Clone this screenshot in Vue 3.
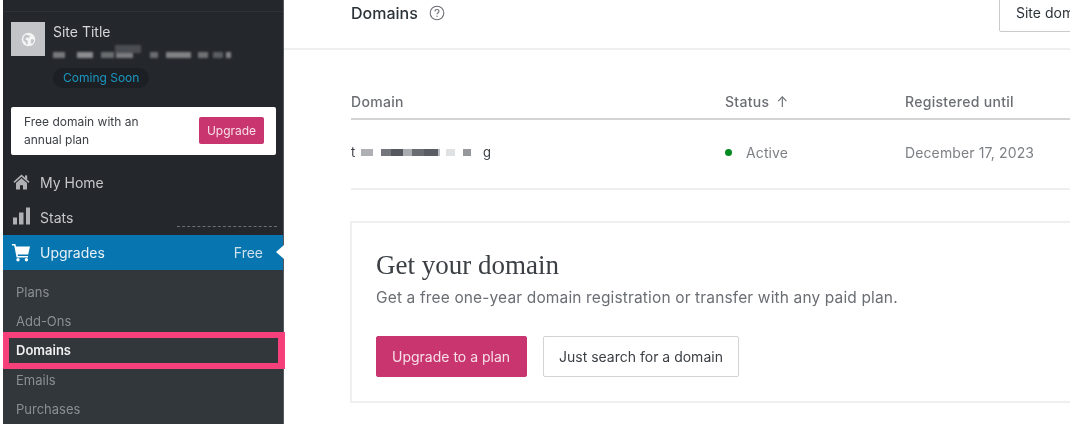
<script setup>
const siteBlocks = [
  { w: 12, c: '#77797d', gap: 12 }, { w: 16, c: '#8a8c8f', gap: 8 }, { w: 13, c: '#6a6d70', gap: 2 }, { w: 17, c: '#7a7c80', gap: 17 },
  { w: 8, c: '#6a6d70', gap: 8 }, { w: 25, c: '#808285', gap: 7 }, { w: 10, c: '#6f7275', gap: 5 }, { w: 10, c: '#5a5d61', gap: 3 },
  { w: 5, c: '#808285', gap: 0 }
]
const domainBlocks = [
  { w: 12, c: '#aeb0b3', gap: 8 }, { w: 10, c: '#74767c', gap: 0 }, { w: 12, c: '#55585f', gap: 0 }, { w: 9, c: '#aaacaf', gap: 0 },
  { w: 12, c: '#6a6c72', gap: 0 }, { w: 14, c: '#5a5d63', gap: 0 }, { w: 2, c: '#bbbcbf', gap: 6 }, { w: 9, c: '#e0e1e3', gap: 8 },
  { w: 8, c: '#96989c', gap: 0 }
]
const subItems = [
  { label: 'Plans' }, { label: 'Add-Ons' }, { label: 'Domains', active: true }, { label: 'Emails' }, { label: 'Purchases' }
]
</script>

<template>
  <div class="app">
    <aside class="sidebar">
      <div class="top-rule"></div>
      <div class="site">
        <div class="site-icon">
          <svg viewBox="0 0 20 20" width="17" height="17">
            <circle cx="10" cy="10" r="8" fill="#f4f4f5" />
            <path d="M7 4.5c2 .2 4 .6 5 1.6l-2.2 2.2-2.4-.6-1 2.2 2.4 1.4.4 3-1.4 1.8-1.6-3.4-2.4-1.8C3.8 7.8 5 5.6 7 4.5z" fill="#c3c4c7" />
            <path d="M13.5 9.5l3 .8c0 2-1 4-2.6 5l-1.4-2.8z" fill="#c3c4c7" />
          </svg>
        </div>
        <div class="site-info">
          <div class="site-title">Site Title</div>
          <div class="site-url">
            <span
              v-for="(b, i) in siteBlocks"
              :key="i"
              class="pixel"
              :style="{ width: b.w + 'px', background: b.c, marginRight: b.gap + 'px' }"
            ></span>
          </div>
          <div class="pill">Coming Soon</div>
        </div>
      </div>

      <div class="upsell">
        <span class="upsell-text">Free domain with an<br />annual plan</span>
        <span class="upsell-btn">Upgrade</span>
      </div>

      <nav class="nav">
        <div class="nav-row">
          <svg class="nav-icon" viewBox="0 0 20 20" width="20" height="20">
            <path d="M5 11 10.5 6.2 16 11v6.6h-4v-4.4H9v4.4H5z" fill="#aeb0b3" />
            <path d="M3 10.4 10.5 3.6l7.5 6.8" fill="none" stroke="#aeb0b3" stroke-width="1.6" />
            <rect x="14" y="3.4" width="2.2" height="4" fill="#aeb0b3" />
          </svg>
          <span>My Home</span>
        </div>
        <div class="nav-row">
          <svg class="nav-icon" viewBox="0 0 20 20" width="20" height="20">
            <rect x="2" y="10.5" width="4" height="7" fill="#aeb0b3" />
            <rect x="8" y="5.5" width="4.5" height="12" fill="#aeb0b3" />
            <rect x="15" y="0.5" width="4" height="17" fill="#aeb0b3" />
          </svg>
          <span>Stats</span>
          <i class="stray-line"></i>
        </div>
        <div class="nav-row current">
          <svg class="nav-icon" viewBox="0 0 20 20" width="20" height="20">
            <path d="M1 2h3.4l.6 2.4H19l-1.8 8H6.6l.4 1.6h10v1.6H5.6L3.2 3.6H1z" fill="#fff" />
            <circle cx="7" cy="17.8" r="1.7" fill="#fff" />
            <circle cx="15.4" cy="17.8" r="1.7" fill="#fff" />
          </svg>
          <span>Upgrades</span>
          <span class="free">Free</span>
          <i class="caret"></i>
        </div>
      </nav>

      <ul class="submenu">
        <li v-for="item in subItems" :key="item.label" :class="{ active: item.active }">{{ item.label }}</li>
      </ul>
    </aside>

    <main class="main">
      <header class="header">
        <div class="header-title">
          <span>Domains</span>
          <svg viewBox="0 0 16 16" width="16" height="16">
            <circle cx="8" cy="8" r="6.8" fill="none" stroke="#6b6e73" stroke-width="1.1" />
            <path d="M6 6.4c0-1.2.9-1.9 2-1.9s2 .7 2 1.7c0 1.5-2 1.5-2 3" fill="none" stroke="#6b6e73" stroke-width="1.1" />
            <circle cx="8" cy="11.3" r=".7" fill="#6b6e73" />
          </svg>
        </div>
        <div class="site-btn">Site domains</div>
      </header>

      <section class="content">
        <div class="table-head">
          <span class="col-domain">Domain</span>
          <span class="col-status">Status <b>↑</b></span>
          <span class="col-date">Registered until</span>
        </div>
        <div class="table-row">
          <span class="col-domain domain-value">
            <span class="letter">t</span>
            <span
              v-for="(b, i) in domainBlocks"
              :key="i"
              class="pixel dom"
              :style="{ width: b.w + 'px', background: b.c, marginRight: b.gap + 'px' }"
            ></span>
            <span class="letter last">g</span>
          </span>
          <span class="col-status status-value"><i class="dot"></i>Active</span>
          <span class="col-date">December 17, 2023</span>
        </div>

        <div class="card">
          <h2>Get your domain</h2>
          <p>Get a free one-year domain registration or transfer with any paid plan.</p>
          <div class="actions">
            <span class="btn primary">Upgrade to a plan</span>
            <span class="btn">Just search for a domain</span>
          </div>
        </div>
      </section>
    </main>
  </div>
</template>

<style>
html, body { margin: 0; background: #fff; overflow: hidden; }
</style>

<style scoped>
.app {
  display: flex;
  width: 1070px;
  height: 424px;
  overflow: hidden;
  background: #fff;
  font-family: Inter, "Liberation Sans", sans-serif;
  filter: blur(0.35px);
}
.sidebar {
  width: 280px;
  margin-left: 3px;
  flex: none;
  background: #24272c;
  border-right: 1px solid #55585c;
  display: flex;
  flex-direction: column;
}
.top-rule { height: 1px; margin-top: 11px; background: #2e3136; }
.site { display: flex; gap: 8px; padding: 10px 0 0 8px; }
.site-icon {
  width: 34px; height: 34px; background: #c3c4c7;
  display: flex; align-items: center; justify-content: center;
}
.site-info { display: flex; flex-direction: column; align-items: flex-start; }
.site-title { font-size: 14px; line-height: 18px; color: #d5d6d8; margin-top: 1px; }
.site-url { position: relative; display: flex; height: 6px; margin-top: 11px; filter: blur(1px); }
.site-url::before {
  content: "";
  position: absolute;
  left: 62px; top: -7px;
  width: 26px; height: 8px;
  background: #4a4d51;
}
.pixel { display: block; height: 6px; flex: none; }
.pill {
  margin-top: 10px;
  height: 20px;
  padding: 0 10px;
  border-radius: 10px;
  background: #1c1f24;
  color: #1b98c2;
  font-size: 12px;
  line-height: 20px;
}
.upsell {
  margin: 19px 7px 0 8px;
  height: 48px;
  background: #fff;
  border-radius: 2px;
  display: flex;
  align-items: center;
  justify-content: space-between;
  padding: 0 12px 0 13px;
  box-sizing: border-box;
}
.upsell-text { font-size: 12px; line-height: 18px; color: #3c4045; }
.upsell-btn {
  width: 65px; height: 27px; border-radius: 2px; background: #c9356e; color: #f6dfe8;
  font-size: 12px; line-height: 27px; text-align: center;
}
.nav { margin-top: 10px; display: flex; flex-direction: column; }
.nav-row {
  position: relative;
  height: 35px;
  display: flex;
  align-items: center;
  padding-left: 8px;
  gap: 9px;
  font-size: 14px;
  color: #c6c8ca;
}
.nav-icon { flex: none; }
.stray-line {
  position: absolute; left: 174px; top: 26px; width: 100px; height: 0;
  border-top: 1px dashed #6c6f73;
}
.nav-row.current { background: #0675b0; color: #e8f1f6; }
.free { margin-left: auto; margin-right: 20px; color: #cde1ec; font-size: 14px; }
.caret {
  position: absolute; right: -1px; top: 10.5px; width: 0; height: 0;
  border-top: 7px solid transparent;
  border-bottom: 7px solid transparent;
  border-right: 8px solid #fff;
}
.submenu {
  list-style: none; margin: 0; padding: 8px 0 0;
  flex: 1;
  background: #32373c;
}
.submenu li {
  height: 29.25px; line-height: 29.25px;
  padding-left: 13px;
  font-size: 13px;
  color: #8b8f94;
}
.submenu li.active {
  position: relative;
  color: #f0f0f1;
  font-weight: 600;
}
.submenu li.active::after {
  content: "";
  position: absolute;
  left: 0; right: -2px; top: -4px; bottom: -3px;
  border: 6px solid #f5407c;
  border-right-width: 7px;
  box-sizing: border-box;
}
.main { flex: 1; min-width: 0; display: flex; flex-direction: column; }
.header {
  height: 32px;
  flex: none;
  border-bottom: 2px solid #eeeff0;
  display: flex;
  justify-content: space-between;
  align-items: flex-end;
  padding: 0 0 16px 67px;
}
.header-title {
  display: flex; align-items: center; gap: 11px;
  font-size: 16px; color: #2c3338; font-weight: 500;
  height: 26px;
  margin-bottom: 6px;
}
.site-btn {
  width: 100px; height: 50px; flex: none;
  margin-right: -29px;
  border: 1px solid #c9cacc;
  border-radius: 2px;
  box-sizing: border-box;
  font-size: 14px; color: #2c3338;
  padding: 0 0 11px 16px;
  line-height: 14px;
  white-space: nowrap;
  overflow: hidden;
  display: flex;
  align-items: flex-end;
}
.content { padding-left: 67px; }
.table-head, .table-row { display: flex; align-items: center; }
.table-head {
  margin-top: 43px;
  height: 17px;
  padding-bottom: 8px;
  border-bottom: 2px solid #d2d3d5;
  color: #6b6e73;
  font-weight: 500;
  font-size: 14px;
  letter-spacing: 0.3px;
}
.table-row {
  height: 64px;
  padding-bottom: 4px;
  border-bottom: 2px solid #eeeff0;
  color: #7d8085;
  font-size: 14px;
  letter-spacing: 0.12px;
}
.col-domain { width: 374px; flex: none; }
.col-status { width: 180px; flex: none; }
.col-status b { font-weight: 400; margin-left: 3px; }
.col-date { white-space: nowrap; }
.domain-value { display: flex; align-items: center; color: #3c4045; }
.letter { font-size: 13px; width: 10px; }
.letter.last { margin-left: 12px; }
.pixel.dom { height: 7px; filter: blur(0.6px); }
.status-value { display: flex; align-items: center; }
.dot { width: 7px; height: 7px; border-radius: 50%; background: #008a20; margin-right: 14px; }
.card {
  margin: 31px 0 0 -1px;
  height: 182px;
  box-sizing: border-box;
  border: 2px solid #eeeff0;
  border-right: none;
  padding: 26px 0 0 24px;
}
.card h2 {
  margin: 0;
  font-family: "Liberation Serif", serif;
  font-weight: 400;
  font-size: 27px;
  line-height: 32px;
  color: #3c4045;
}
.card p {
  margin: 5px 0 0;
  font-size: 15.5px;
  line-height: 24px;
  letter-spacing: 0.14px;
  color: #6b6e73;
  white-space: nowrap;
}
.actions { display: flex; gap: 16px; margin-top: 26px; }
.btn {
  height: 41px; box-sizing: border-box;
  padding: 0 15px;
  border: 1px solid #d2d3d5;
  border-radius: 2px;
  display: flex; align-items: center;
  font-size: 14px; color: #3c4045;
}
.btn.primary { width: 151px; background: #c9356e; border-color: #c9356e; color: #f6dfe8; }
</style>
